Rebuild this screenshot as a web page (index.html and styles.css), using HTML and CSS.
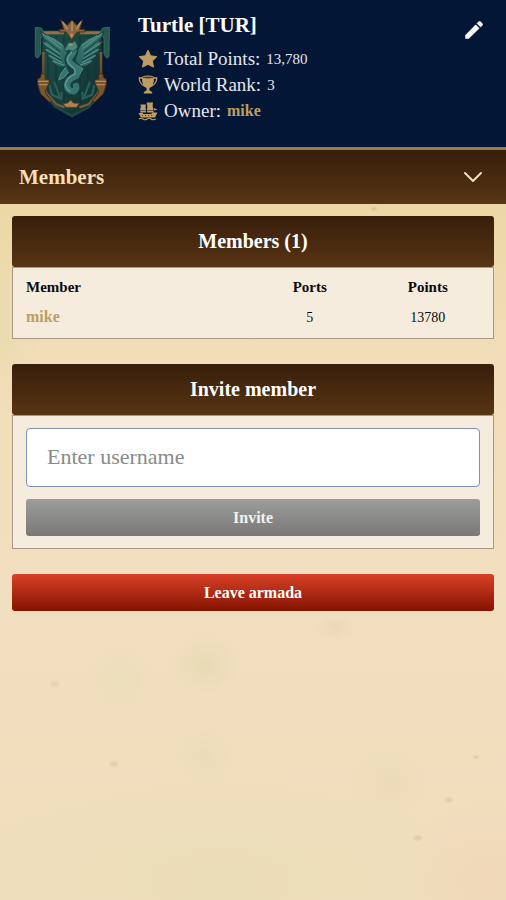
FILE: index.html
```
<!DOCTYPE html>
<html lang="en">
<head>
    <meta charset="UTF-8">
    <meta name="viewport" content="width=device-width, initial-scale=1.0">
    <title>Turtle [TUR]</title>
    <link rel="stylesheet" href="styles.css">
</head>
<body>
    <!-- Armada header -->
    <header class="armada-header">
        <svg class="crest" viewBox="40 38 232 300" aria-hidden="true">
            <defs>
                <linearGradient id="shield" x1="0" y1="0" x2="1" y2="1">
                    <stop offset="0" stop-color="#1f4f49"/>
                    <stop offset="0.5" stop-color="#173f3d"/>
                    <stop offset="1" stop-color="#0f3231"/>
                </linearGradient>
                <linearGradient id="bronze" gradientUnits="userSpaceOnUse" x1="0" y1="80" x2="0" y2="310">
                    <stop offset="0" stop-color="#94704a"/>
                    <stop offset="0.5" stop-color="#6b4a2c"/>
                    <stop offset="1" stop-color="#7d5a35"/>
                </linearGradient>
                <linearGradient id="wing" x1="0" y1="0" x2="0" y2="1">
                    <stop offset="0" stop-color="#3f7b72"/>
                    <stop offset="1" stop-color="#28645e"/>
                </linearGradient>
            </defs>
            <!-- shield -->
            <path d="M66 76H246V218L238 270L208 302L156 334L102 304L72 268L66 218Z" fill="url(#shield)" stroke="#152a2b" stroke-width="4"/>
            <path d="M84 92V286M108 92V304M132 92V318M180 92V318M204 92V302M228 92V280" fill="none" stroke="#123534" stroke-width="3"/>
            <path d="M68 82H132M180 82H244" fill="none" stroke="url(#bronze)" stroke-width="9"/>
            <path d="M70 140V222L78 262L108 296L134 306M243 140V222L235 262L207 296L178 306" fill="none" stroke="url(#bronze)" stroke-width="7"/>
            <path d="M76 270L108 306L156 332L206 306L240 268" fill="none" stroke="#20463f" stroke-width="7"/>
            <!-- banner ends -->
            <path d="M46 66L64 68L72 84L62 98V146L54 158L46 154Z" fill="#25564f" stroke="#356a61" stroke-width="3"/>
            <path d="M268 66L248 68L240 84L252 98V146L260 158L267 154Z" fill="#25564f" stroke="#356a61" stroke-width="3"/>
            <!-- crown -->
            <path d="M122 43L142 60L156 44L170 60L188 43L179 72H194V80H172L164 90L155 104L146 90L138 80H118V72H131Z" fill="#8a6440" stroke="#4d331a" stroke-width="3"/>
            <path d="M127 49L143 72M156 50V78M183 49L169 72" fill="none" stroke="#c09468" stroke-width="4"/>
            <path d="M155 82L161 90L155 98L149 90Z" fill="#b98a58"/>
            <!-- wings -->
            <path d="M143 180Q128 190 112 181L92 168L98 164L80 151L88 148L71 130L80 130L65 108L76 111L61 78L82 90L105 98L128 114L143 142Z" fill="url(#wing)" stroke="#153f3d" stroke-width="3"/>
            <path d="M166 180Q184 190 201 181L220 168L214 164L232 151L224 148L242 130L233 130L248 108L237 111L252 78L230 90L207 98L185 114L168 142Z" fill="url(#wing)" stroke="#153f3d" stroke-width="3"/>
            <path d="M67 85L124 130M71 112L121 147M77 132L123 160M86 150L126 171M98 167L133 180M82 91L128 122" fill="none" stroke="#5f968c" stroke-width="3"/>
            <path d="M246 85L188 130M242 112L191 147M236 132L189 160M227 150L186 171M214 167L179 180M231 91L184 122" fill="none" stroke="#5f968c" stroke-width="3"/>
            <path d="M70 99L121 139M75 123L121 154M83 142L125 166M242 99L191 139M237 123L191 154M229 142L187 166" fill="none" stroke="#194b47" stroke-width="4"/>
            <!-- serpent -->
            <path d="M158 126Q166 140 152 152Q140 166 158 179Q182 194 168 212Q143 220 141 240Q143 258 161 258Q171 252 168 242" fill="none" stroke="#143e3d" stroke-width="28" stroke-linecap="round"/>
            <path d="M158 126Q166 140 152 152Q140 166 158 179Q182 194 168 212Q143 220 141 240Q143 258 161 258Q171 252 168 242" fill="none" stroke="#35756e" stroke-width="19" stroke-linecap="round"/>
            <path d="M154 130Q160 141 146 152Q136 168 154 181Q172 196 162 207Q140 217 136 238Q138 252 152 258" fill="none" stroke="#639a90" stroke-width="4"/>
            <path d="M134 133L142 117L146 110L156 112L166 106L174 126L160 138L146 134L138 138Z" fill="#4b877d" stroke="#1b4d49" stroke-width="3"/>
            <path d="M147 120L158 117" stroke="#a9a276" stroke-width="4"/>
            <path d="M138 184L122 206L116 224L132 217L146 200M174 182L189 190L180 204" fill="#35756c" stroke="#568e85" stroke-width="3"/>
            <!-- anchors -->
            <path d="M102 229L119 274M88 240L96 268L124 280L125 260M210 229L193 274M223 240L216 268L188 280L187 260" fill="none" stroke="#2a625b" stroke-width="6"/>
            <!-- lanterns -->
            <path d="M65 203L76 208V222H87V235L79 250L76 262L96 288L88 290L62 266L53 238V222L61 217ZM247 203L236 208V222H225V235L233 250L236 262L216 288L224 290L250 266L259 238V222L251 217Z" fill="#79552f" stroke="#452d18" stroke-width="3"/>
            <path d="M54 228H86M58 238H82M226 228H258M230 238H254" stroke="#b58a57" stroke-width="4"/>
            <path d="M129 295L143 293L152 284L160 293L178 294L170 306H138Z" fill="#b18350" stroke="#61401f" stroke-width="3"/>
        </svg>
        <div class="armada-info">
            <h1>Turtle [TUR]</h1>
            <p class="stat">
                <svg class="stat-icon" viewBox="0 0 20 20" aria-hidden="true">
                    <path d="M10 1.2L12.7 6.8L18.8 7.7L14.4 12L15.5 18.2L10 15.3L4.5 18.2L5.6 12L1.2 7.7L7.3 6.8Z" fill="currentColor" stroke="currentColor" stroke-width="1" stroke-linejoin="round"/>
                </svg>
                <span>Total Points:</span> <span class="number">13,780</span>
            </p>
            <p class="stat">
                <svg class="stat-icon" viewBox="0 0 20 20" aria-hidden="true">
                    <path d="M4.500 2V3H1.200Q1.500 9 7 11.500" fill="none" stroke="currentColor" stroke-width="1.300"/>
                    <path d="M15.500 2V3H18.800Q18.500 9 13 11.500" fill="none" stroke="currentColor" stroke-width="1.300"/>
                    <path d="M4 3H16Q16 11 11.500 13V15.500Q14 16 14.500 18.500H5.500Q6 16 8.500 15.500V13Q4 11 4 3Z" fill="currentColor"/>
                    <ellipse cx="10" cy="2.500" rx="6" ry="1.500" fill="#4e422f" stroke="currentColor" stroke-width="1"/>
                </svg>
                <span>World Rank:</span> <span class="number">3</span>
            </p>
            <p class="stat">
                <svg class="stat-icon" viewBox="0 0 20 20" aria-hidden="true">
                    <path d="M2.500 3.500H8Q7 6 8 9H2Q3.500 6 2.500 3.500ZM8.500 1.500H15Q14 5 15.500 9H9Q10 5 8.500 1.500ZM2.500 9.500H8V11.500H2ZM9 9.500H15.500V11.500H9ZM16 7L19.500 8.500L16 9.500ZM0.500 12H5V13H13L15 11.500H19.500L17 16.500H3Z" fill="currentColor"/>
                    <path d="M1 18Q3 16.500 5 18T9 18T13 18T18 18" fill="none" stroke="currentColor" stroke-width="1.200"/>
                    <path d="M4 14.500H16" stroke="#4e422f" stroke-dasharray="1 2"/>
                </svg>
                <span>Owner:</span> <a href="#" class="player-link">mike</a>
            </p>
        </div>
        <button type="button" class="edit-button" aria-label="Edit armada">
            <svg viewBox="3 3 18 18" aria-hidden="true">
                <path d="M3.500 17.200V20.500H6.800L17.200 10.300L13.700 6.800L3.500 17.200ZM20.500 7.200Q21 6.500 20.500 5.800L18.200 3.500Q17.500 3 16.800 3.500L15 5.400L18.600 9L20.500 7.200Z" fill="currentColor" stroke="currentColor" stroke-width="0.500" stroke-linejoin="round"/>
            </svg>
        </button>
    </header>

    <!-- Section menu -->
    <button type="button" class="section-menu">
        <span>Members</span>
        <svg class="chevron" viewBox="0 0 18 12" aria-hidden="true">
            <path d="M1 2L9 10L17 2" fill="none" stroke="currentColor" stroke-width="2" stroke-linecap="round" stroke-linejoin="round"/>
        </svg>
    </button>

    <main class="content">
        <section class="card">
            <h2>Members (1)</h2>
            <div class="card-body members-body">
                <table class="members-table">
                    <thead>
                        <tr>
                            <th class="name-col">Member</th>
                            <th class="ports-col">Ports</th>
                            <th class="points-col">Points</th>
                        </tr>
                    </thead>
                    <tbody>
                        <tr>
                            <td><a href="#" class="player-link">mike</a></td>
                            <td>5</td>
                            <td>13780</td>
                        </tr>
                    </tbody>
                </table>
            </div>
        </section>

        <section class="card">
            <h2>Invite member</h2>
            <form class="card-body invite-form">
                <input type="text" name="username" placeholder="Enter username" aria-label="Enter username">
                <button type="submit" class="button invite-button" disabled>Invite</button>
            </form>
        </section>

        <button type="button" class="button leave-button">Leave armada</button>
    </main>
</body>
</html>
```
FILE: styles.css
```
/* General Styles */
* {
    box-sizing: border-box;
}

body {
    margin: 0;
    min-height: 100vh;
    font-family: "Liberation Serif", serif;
    color: #0a0a0a;
    background-color: #f2dfc0;
    background-image:
        radial-gradient(ellipse 6px 4px at 114px 764px, rgba(175, 155, 105, 0.3), transparent),
        radial-gradient(ellipse 6px 4px at 418px 838px, rgba(175, 145, 105, 0.3), transparent),
        radial-gradient(ellipse 6px 4px at 449px 800px, rgba(175, 155, 105, 0.3), transparent),
        radial-gradient(ellipse 4px 3px at 476px 757px, rgba(175, 155, 105, 0.3), transparent),
        radial-gradient(ellipse 7px 5px at 55px 684px, rgba(175, 155, 105, 0.2), transparent),
        radial-gradient(ellipse 4px 3px at 374px 209px, rgba(175, 155, 105, 0.4), transparent),
        radial-gradient(ellipse 20px 12px at 335px 627px, rgba(205, 190, 140, 0.2), transparent),
        radial-gradient(ellipse 36px 32px at 206px 665px, rgba(215, 210, 160, 0.35), transparent),
        radial-gradient(ellipse 30px 35px at 120px 680px, rgba(222, 217, 170, 0.3), transparent),
        radial-gradient(ellipse 30px 30px at 205px 755px, rgba(222, 210, 165, 0.25), transparent),
        radial-gradient(ellipse 40px 35px at 390px 782px, rgba(222, 208, 165, 0.25), transparent),
        radial-gradient(ellipse 90px 80px at 490px 880px, rgba(240, 212, 182, 0.6), transparent),
        radial-gradient(ellipse 240px 110px at 220px 880px, rgba(233, 221, 182, 0.6), transparent),
        radial-gradient(ellipse 40px 80px at 0 330px, rgba(230, 219, 170, 0.6), transparent),
        linear-gradient(#ebd8a5 204px, #f1ddb8 350px, #f2dfc0 600px, #efddbb 900px);
}

a {
    text-decoration: none;
}

button {
    font-family: inherit;
    cursor: pointer;
}

/* Armada header */
.armada-header {
    display: flex;
    align-items: flex-start;
    padding: 12px 23px 23px 33px;
    color: #e6e6ee;
    background-color: #041635;
    border-bottom: 3px solid #9c7a49;
}

.crest {
    flex: none;
    width: 78px;
    height: 100px;
    margin: 6px 27px 0 0;
}

.armada-info {
    flex: 1;
}

.armada-info h1 {
    margin: 0 0 8px;
    font-size: 21px;
    line-height: 26px;
    color: #fff;
}

.stat {
    display: flex;
    align-items: center;
    gap: 6px;
    margin: 0;
    font-size: 19px;
    line-height: 26px;
}

.stat-icon {
    width: 20px;
    height: 20px;
    color: #bd9d62;
}

.number {
    font-size: 15px;
}

.player-link {
    font-weight: bold;
    font-size: 16px;
    color: #bd9d62;
}

.edit-button {
    display: flex;
    margin-top: 9px;
    padding: 0;
    color: #fff;
    background: none;
    border: none;
}

.edit-button svg {
    width: 18px;
    height: 18px;
}

/* Section menu */
.section-menu {
    display: flex;
    justify-content: space-between;
    align-items: center;
    width: 100%;
    height: 54px;
    padding: 0 24px 0 19px;
    font-size: 21px;
    font-weight: bold;
    color: #f5dfbd;
    background: linear-gradient(#371e0a, #583514);
    border: none;
}

.chevron {
    width: 18px;
    height: 12px;
}

/* Content */
.content {
    display: flex;
    flex-direction: column;
    gap: 25px;
    padding: 12px;
}

.card h2 {
    margin: 0;
    font-size: 20px;
    line-height: 51px;
    text-align: center;
    color: #fff;
    background: linear-gradient(#371e0a, #583514);
    border-radius: 3px;
}

.card-body {
    background-color: #f6ecde;
    border: 1px solid #a89889;
}

/* Members table */
.members-body {
    padding: 5px 13px 6px;
}

.members-table {
    width: 100%;
    table-layout: fixed;
    border-collapse: collapse;
    line-height: 29px;
}

.members-table th,
.members-table td {
    padding: 0;
    text-align: center;
}

.members-table th {
    font-size: 15px;
}

.members-table td {
    font-size: 14px;
}

.members-table th:first-child,
.members-table td:first-child {
    text-align: left;
}

.name-col {
    width: 48%;
}

.ports-col {
    width: 29%;
}

.points-col {
    width: 23%;
}

/* Invite form */
.invite-form {
    display: flex;
    flex-direction: column;
    gap: 12px;
    padding: 12px 13px;
}

.invite-form input {
    width: 100%;
    height: 59px;
    padding: 0 20px 2px;
    font-family: inherit;
    font-size: 22px;
    background-color: #fff;
    border: 1px solid #7d90b5;
    border-radius: 4px;
}

.invite-form input::placeholder {
    color: #8a8a8a;
}

/* Buttons */
.button {
    width: 100%;
    height: 37px;
    padding: 0;
    font-size: 16px;
    font-weight: bold;
    color: #fff;
    border: none;
    border-radius: 3px;
}

.invite-button {
    color: #f1f1f1;
    background: linear-gradient(#9a9d98, #7b7878);
}

.leave-button {
    background: linear-gradient(#d94127, #841300);
}
```
